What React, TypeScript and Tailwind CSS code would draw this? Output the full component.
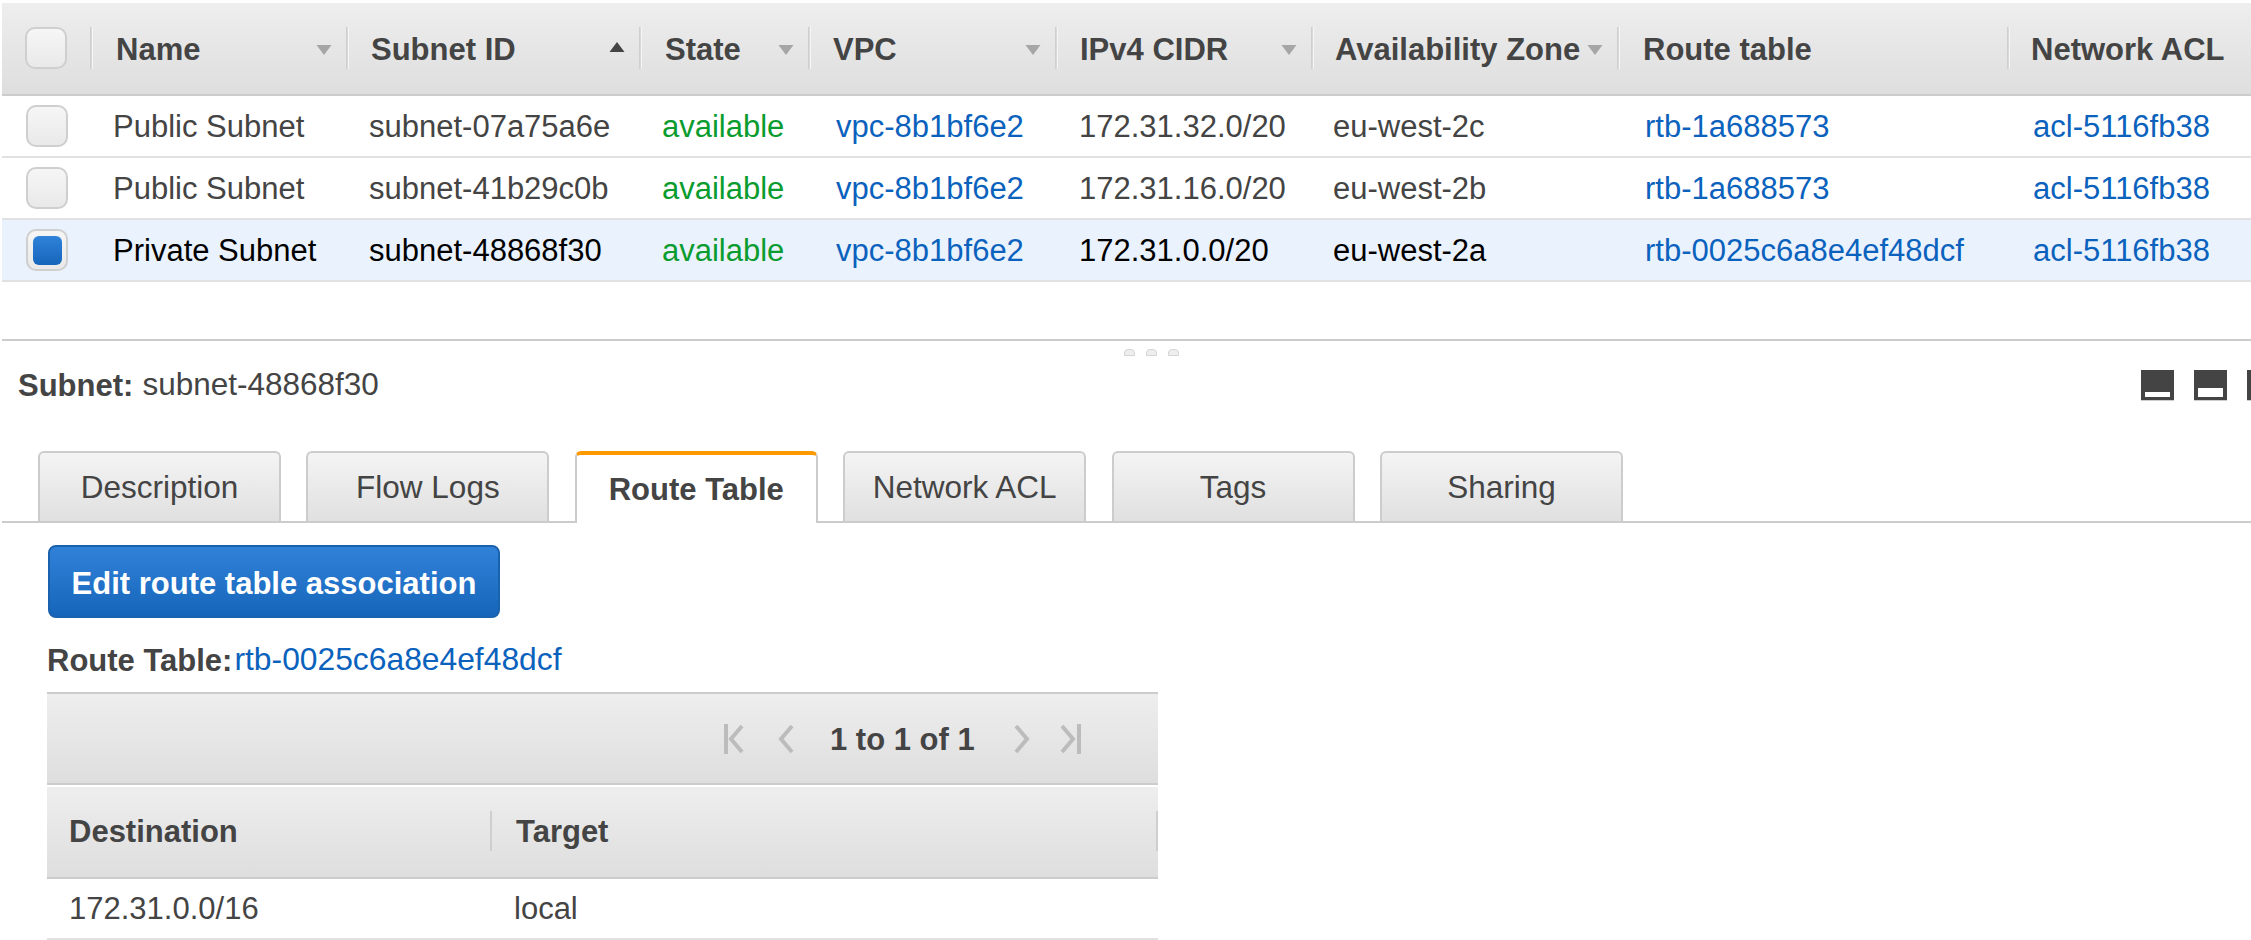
const COLUMNS = [
  { title: "Name", width: "w-[256px]", text: "pl-[26px]", cell: "pl-[23px]", sort: "none" },
  { title: "Subnet ID", width: "w-[293px]", text: "pl-[25px]", cell: "pl-[23px]", sort: "asc" },
  { title: "State", width: "w-[169px]", text: "pl-[26px]", cell: "pl-[23px]", sort: "none" },
  { title: "VPC", width: "w-[247px]", text: "pl-[25px]", cell: "pl-[28px]", sort: "none" },
  { title: "IPv4 CIDR", width: "w-[256px]", text: "pl-[25px]", cell: "pl-[24px]", sort: "none" },
  { title: "Availability Zone", width: "w-[306px]", text: "pl-[24px]", cell: "pl-[22px]", sort: "none" },
  { title: "Route table", width: "w-[390px]", text: "pl-[26px]", cell: "pl-[28px]", sort: "" },
  { title: "Network ACL", width: "w-[242px]", text: "pl-[24px]", cell: "pl-[26px]", sort: "" },
];

const ROWS = [
  ["Public Subnet", "subnet-07a75a6e", "available", "vpc-8b1bf6e2", "172.31.32.0/20", "eu-west-2c", "rtb-1a688573", "acl-5116fb38"],
  ["Public Subnet", "subnet-41b29c0b", "available", "vpc-8b1bf6e2", "172.31.16.0/20", "eu-west-2b", "rtb-1a688573", "acl-5116fb38"],
  ["Private Subnet", "subnet-48868f30", "available", "vpc-8b1bf6e2", "172.31.0.0/20", "eu-west-2a", "rtb-0025c6a8e4ef48dcf", "acl-5116fb38"],
];

const TABS = ["Description", "Flow Logs", "Route Table", "Network ACL", "Tags", "Sharing"];

function Separator() {
  return <div className="absolute left-0 top-[24px] h-[42px] w-[3px] border-x border-l-[#cfcfcf] border-r-[#f6f6f6] bg-[#d8d8d8]" />;
}

function SortArrow({ sort }: { sort: string }) {
  if (!sort) return null;
  if (sort === "asc") {
    return (
      <svg className="absolute right-[14px] top-[39px]" width="16" height="11" viewBox="0 0 16 11">
        <path d="M8 0 L15.5 10 L0.5 10 Z" fill="#444" />
      </svg>
    );
  }
  return (
    <svg className="absolute right-[14px] top-[41px]" width="16" height="12" viewBox="0 0 16 12">
      <path d="M0.5 1 L15.5 1 L8 11 Z" fill="#a6a6a6" />
    </svg>
  );
}

function Checkbox({ checked }: { checked?: boolean }) {
  return (
    <div className="flex size-[42px] items-center justify-center rounded-[10px] border-2 border-[#cfcfcf] bg-gradient-to-b from-[#f6f6f6] to-[#e9e9e9]">
      {checked && <div className="size-[29px] rounded-[6px] bg-gradient-to-b from-[#2f83d9] to-[#1565bb]" />}
    </div>
  );
}

function PaneIcon({ bar }: { bar: string }) {
  return (
    <svg width="33" height="31" viewBox="0 0 33 31" className="shrink-0">
      <rect width="33" height="30" fill="#444" />
      <rect y="30" width="33" height="1" fill="#ccc" />
      <path d={bar} fill="#fff" />
    </svg>
  );
}

function PagerIcon({ d }: { d: string }) {
  return (
    <svg width="23" height="30" viewBox="0 0 23 30" className="shrink-0">
      <path d={d} fill="none" stroke="#bcbcbc" strokeWidth="4" />
    </svg>
  );
}

export default function App() {
  return (
    <div className="h-[940px] w-[2251px] overflow-hidden bg-white pl-[2px] pt-[3px] text-[31px] leading-none text-[#444] [font-family:'Liberation_Sans',Arial,sans-serif]">
      {/* subnets table */}
      <div className="flex h-[93px] border-b-2 border-[#ccc] bg-gradient-to-b from-[#eeeeee] to-[#dedede]">
        <div className="relative flex h-[91px] w-[88px] pl-[23px] pt-[24px]">
          <Checkbox />
        </div>
        {COLUMNS.map((col) => (
          <div key={col.title} className={`relative ${col.width} ${col.text} pt-[31px] font-bold`}>
            <Separator />
            {col.title}
            <SortArrow sort={col.sort} />
          </div>
        ))}
      </div>
      {ROWS.map((row, i) => {
        const selected = i === 2;
        return (
          <div key={row[1]} className={`flex h-[62px] items-center border-b-2 border-[#e1e1e1] ${selected ? "bg-[#eaf2fd] text-black" : ""}`}>
            <div className="w-[88px] pl-[24px]">
              <Checkbox checked={selected} />
            </div>
            {row.map((value, c) => (
              <div
                key={c}
                className={`${COLUMNS[c].width} ${COLUMNS[c].cell} ${c === 2 ? "text-[#0a9c2e]" : ""} ${c === 3 || c >= 6 ? "text-[#0b62bd]" : ""}`}
              >
                {value}
              </div>
            ))}
          </div>
        );
      })}

      {/* split pane */}
      <div className="mt-[57px] border-t-2 border-[#ccc]">
        <div className="flex gap-[11px] pl-[1122px] pt-[8px]">
          {[0, 1, 2].map((n) => (
            <div key={n} className="h-[7px] w-[11px] rounded-t-[4px] border border-[#d5d5d5] bg-[#eee]" />
          ))}
        </div>
        <div className="flex h-[58px] items-center pl-[16px]">
          <span className="font-bold">Subnet:</span>
          <span className="ml-[9px] text-[31.5px]">subnet-48868f30</span>
          <div className="ml-auto flex items-center gap-[20px]">
            <PaneIcon bar="M4 22h25v5H4z" />
            <PaneIcon bar="M4 18h25v9H4z" />
            <div className="w-[4px] overflow-hidden">
              <PaneIcon bar="" />
            </div>
          </div>
        </div>

        {/* tabs */}
        <div className="mt-[37px] flex h-[72px] items-start gap-[25.4px] border-b-2 border-[#ccc] pl-[36px]">
          {TABS.map((tab) =>
            tab === "Route Table" ? (
              <div key={tab} className="relative z-10 flex h-[72px] w-[243px] shrink-0 items-center justify-center rounded-t-[6px] border-x-2 border-t-4 border-x-[#ccc] border-t-[#ff9900] bg-white font-bold">
                {tab}
              </div>
            ) : (
              <div key={tab} className="flex h-[70px] w-[243px] shrink-0 items-center justify-center rounded-t-[6px] border-x-2 border-t-2 border-[#ccc] bg-gradient-to-b from-[#f4f4f4] to-[#e0e0e0] pt-[2px] text-[31.5px]">
                {tab}
              </div>
            ),
          )}
        </div>

        <div className="ml-[46px] mt-[22px] flex h-[73px] w-[452px] items-center justify-center rounded-[8px] border-2 border-[#1b62ae] bg-gradient-to-b from-[#3082d8] to-[#1565bb] pt-[3px] font-bold text-white">
          Edit route table association
        </div>

        <div className="ml-[45px] mt-[22px] flex h-[40px] items-center">
          <span className="font-bold">Route Table:</span>
          <span className="ml-[2px] text-[31.8px] text-[#0b62bd]">rtb-0025c6a8e4ef48dcf</span>
        </div>

        {/* route table */}
        <div className="ml-[45px] mt-[12px] w-[1111px]">
          <div className="flex h-[93px] items-center border-y-2 border-[#ccc] bg-gradient-to-b from-[#eeeeee] to-[#dedede] pl-[676px]">
            <PagerIcon d="M3 0v30M19 2 8 15l11 13" />
            <div className="ml-[32px]">
              <PagerIcon d="M14 2 3 15l11 13" />
            </div>
            <span className="ml-[29px] pt-[2px] font-bold">1 to 1 of 1</span>
            <div className="ml-[38px]">
              <PagerIcon d="M3 2l11 13L3 28" />
            </div>
            <div className="ml-[23px]">
              <PagerIcon d="M20 0v30M3 2l11 13L3 28" />
            </div>
          </div>
          <div className="mt-[2px] flex h-[92px] border-b-2 border-[#ccc] bg-gradient-to-b from-[#eeeeee] to-[#dedede] font-bold">
            <div className="w-[443px] pl-[22px] pt-[29px]">Destination</div>
            <div className="relative flex-1 pl-[26px] pt-[29px]">
              <div className="absolute left-0 top-[24px] h-[40px] w-[2px] bg-[#cfcfcf]" />
              Target
              <div className="absolute right-0 top-[24px] h-[40px] w-[2px] bg-[#cfcfcf]" />
            </div>
          </div>
          <div className="flex h-[61px] items-center border-b-2 border-[#e1e1e1]">
            <div className="w-[443px] pl-[22px]">172.31.0.0/16</div>
            <div className="pl-[24px]">local</div>
          </div>
        </div>
      </div>
    </div>
  );
}
